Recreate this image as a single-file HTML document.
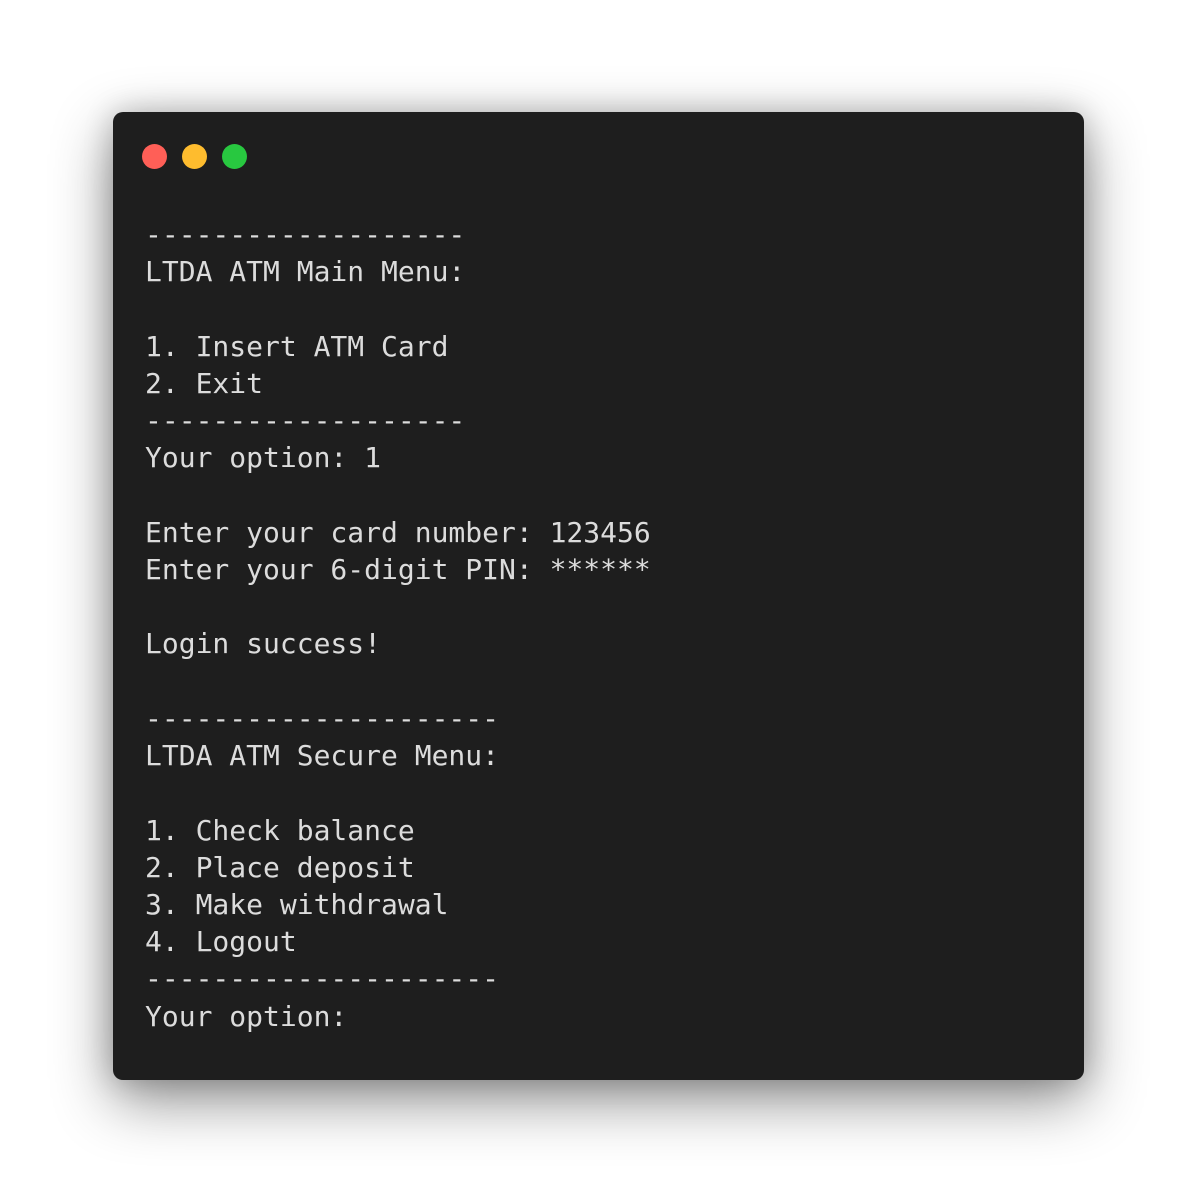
<!DOCTYPE html>
<html><head><meta charset="utf-8"><style>
html,body{margin:0;padding:0;background:#fff;width:1196px;height:1192px;overflow:hidden}
.win{position:absolute;left:113px;top:112px;width:971px;height:968px;background:#1e1e1e;border-radius:10px;box-shadow:0 20px 60px rgba(0,0,0,0.45),0 0 30px rgba(0,0,0,0.2)}
.dot{position:absolute;top:31.5px;width:25px;height:25px;border-radius:50%}
pre{position:absolute;left:32px;top:104px;margin:0;font-family:"DejaVu Sans Mono","Liberation Mono",monospace;font-size:28px;line-height:37.22px;color:#dcdcdc}
</style></head><body>
<div class="win">
<div class="dot" style="left:28.5px;background:#ff5f57"></div>
<div class="dot" style="left:68.5px;background:#febc2e"></div>
<div class="dot" style="left:108.5px;background:#28c840"></div>
<pre>-------------------
LTDA ATM Main Menu:

1. Insert ATM Card
2. Exit
-------------------
Your option: 1

Enter your card number: 123456
Enter your 6-digit PIN: ******

Login success!

---------------------
LTDA ATM Secure Menu:

1. Check balance
2. Place deposit
3. Make withdrawal
4. Logout
---------------------
Your option:</pre>
</div>
</body></html>
